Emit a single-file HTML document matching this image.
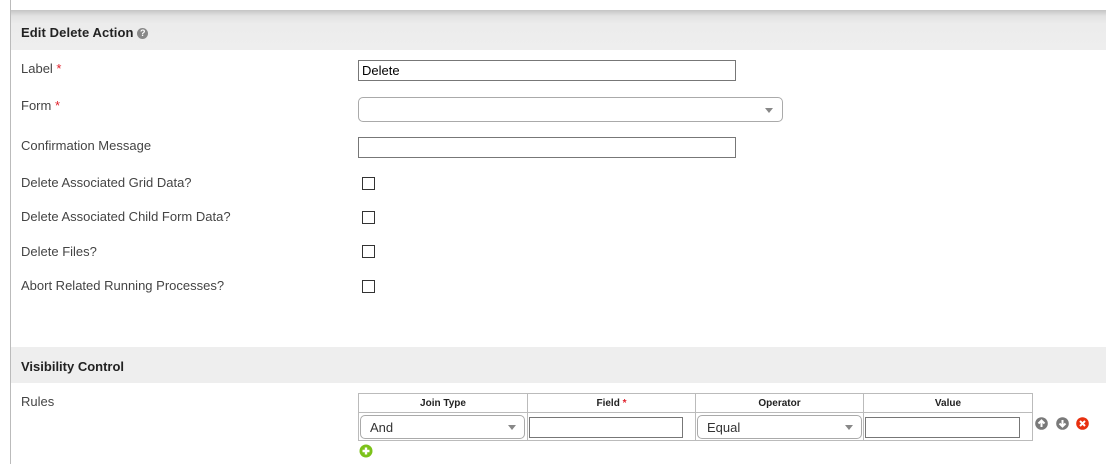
<!DOCTYPE html>
<html><head><style>
*{margin:0;padding:0;box-sizing:border-box}
body{width:1106px;height:464px;background:#fff;position:relative;overflow:hidden;font-family:"Liberation Sans",Arial,sans-serif;font-size:13px;color:#444}
.a{position:absolute}
.lb{position:absolute;left:21px;line-height:14px}
.req{color:#e0202b}
.hd{position:absolute;left:11px;right:0;font-weight:bold;color:#222;font-size:13px;padding-left:10px}
.in{position:absolute;border:1px solid #777;background:#fff;height:21px}
.cb{position:absolute;left:362px;width:13px;height:13px;border:1px solid #333;background:#fff}
.sel{position:absolute;border:1px solid #aaa;border-radius:5px;background:#fff}
.arr{position:absolute;width:0;height:0;border-left:4px solid transparent;border-right:4px solid transparent;border-top:5px solid #888}
table{position:absolute;left:358px;top:393px;border-collapse:collapse}
td,th{border:1px solid #bbb;padding:0}
th{height:18px;font-size:10px;font-weight:bold;color:#222;text-align:center;line-height:17px;padding-top:1px}
td{height:28px;position:relative}
</style></head><body>
<div class="a" style="left:10px;top:0;width:1px;height:464px;background:#bbb"></div>
<div class="hd" style="top:10px;height:40px;background:linear-gradient(#c4c4c4 0px,#e2e2e2 6px,#ececec 14px,#eee 40px);line-height:46px;letter-spacing:0.1px">Edit Delete Action <span style="display:inline-block;width:11px;height:11px;border-radius:50%;background:#888;color:#fff;font-size:9px;line-height:11px;text-align:center;vertical-align:1px">?</span></div>
<div class="lb" style="top:62px">Label <span class="req">*</span></div>
<div class="in" style="left:358px;top:60px;width:378px;color:#000;padding-left:3px;line-height:19px;font-size:13px">Delete</div>
<div class="lb" style="top:99px">Form <span class="req">*</span></div>
<div class="sel" style="left:358px;top:97px;width:425px;height:25px"><div class="arr" style="right:9px;top:10px"></div></div>
<div class="lb" style="top:139px">Confirmation Message</div>
<div class="in" style="left:358px;top:137px;width:378px"></div>
<div class="lb" style="top:176px">Delete Associated Grid Data?</div>
<div class="cb" style="top:177px"></div>
<div class="lb" style="top:210px">Delete Associated Child Form Data?</div>
<div class="cb" style="top:211px"></div>
<div class="lb" style="top:245px">Delete Files?</div>
<div class="cb" style="top:245px"></div>
<div class="lb" style="top:279px">Abort Related Running Processes?</div>
<div class="cb" style="top:280px"></div>
<div class="hd" style="top:347px;height:36px;background:#eee;line-height:39px">Visibility Control</div>
<div class="lb" style="top:395px">Rules</div>
<table><tr><th style="width:169px">Join Type</th><th style="width:168px">Field <span class="req">*</span></th><th style="width:168px">Operator</th><th style="width:169px">Value</th></tr>
<tr><td><div class="sel" style="left:1px;top:2px;width:165px;height:24px;font-size:13px;color:#333;padding-left:9px;line-height:24px">And<div class="arr" style="right:8px;top:9px"></div></div></td>
<td><div class="in" style="left:1px;top:4px;width:154px;border-color:#777"></div></td>
<td><div class="sel" style="left:1px;top:2px;width:165px;height:24px;font-size:13px;color:#333;padding-left:9px;line-height:24px">Equal<div class="arr" style="right:8px;top:9px"></div></div></td>
<td><div class="in" style="left:1px;top:4px;width:155px"></div></td></tr></table>
<svg class="a" style="left:1035px;top:417px" width="56" height="14" viewBox="0 0 56 14">
<circle cx="6.5" cy="6.5" r="6.3" fill="#7a7a7a"/><path d="M6.5 10V3.5M3.5 6.5l3-3 3 3" stroke="#fff" stroke-width="2" fill="none"/>
<circle cx="27.5" cy="6.5" r="6.3" fill="#7a7a7a"/><path d="M27.5 3v6.5M24.5 6.5l3 3 3-3" stroke="#fff" stroke-width="2" fill="none"/>
<circle cx="47.5" cy="6.5" r="6.3" fill="#e8300f"/><path d="M45 4l5 5M50 4l-5 5" stroke="#fff" stroke-width="2"/>
</svg>
<svg class="a" style="left:359px;top:444px" width="14" height="14"><circle cx="7" cy="7" r="6.5" fill="#7cc21a"/><path d="M7 3.5v7M3.5 7h7" stroke="#fff" stroke-width="2.4"/></svg>
</body></html>
